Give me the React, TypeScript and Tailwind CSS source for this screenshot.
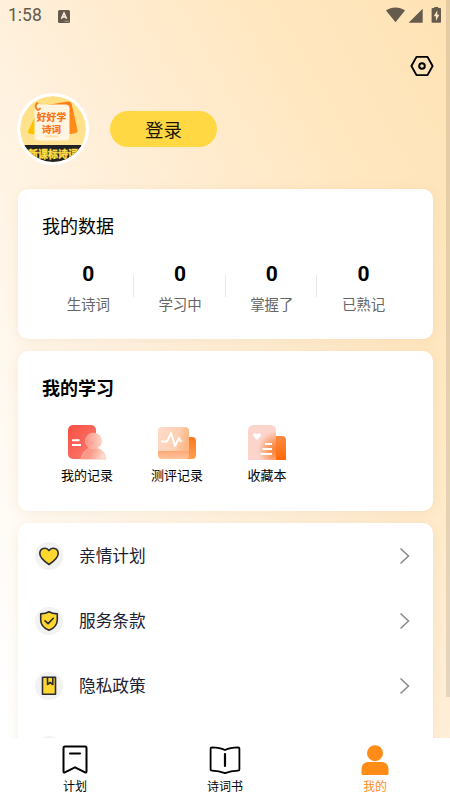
import type { ReactNode } from "react";

const stats = [
  { label: "生诗词", value: 0 },
  { label: "学习中", value: 0 },
  { label: "掌握了", value: 0 },
  { label: "已熟记", value: 0 },
];

function StatusBar() {
  return (
    <div className="flex h-[32px] shrink-0 items-center pl-[8px] pr-[8px] text-[#655b4c]">
      <span className="font-[Roboto] text-[17.5px] leading-none">1:58</span>
      <svg className="ml-[16px] h-[13px] w-[12px]" viewBox="0 0 12 13">
        <rect width="12" height="13" rx="1.5" fill="currentColor" />
        <path d="M3.4 8.8 6 3l2.6 5.8M4.4 7h3.2" fill="none" stroke="#fff2df" strokeWidth="1.5" />
        <path d="M6.5 11.3h4.5" stroke="#b3a897" strokeWidth="0.8" />
      </svg>
      <svg className="ml-auto h-[18px] w-[58px]" viewBox="0 0 58 18" fill="currentColor">
        <path d="M2 3.600C7.400-.700 15.600-.700 21 3.600L11.500 15.200Z" />
        <path d="M38.700 1.700v14H24.600Z" />
        <path d="M50.300-.500h3.900v1.600h2.100q.7 0 .7.800v13.100q0 .7-.7.700h-8q-.7 0-.7-.7V1.900q0-.8.700-.8h2z" />
        <path d="M53.300 3.500 49.700 9.200h2.200v4.800l3.400-6.200h-2z" fill="#ffe6bf" />
      </svg>
    </div>
  );
}

function Avatar() {
  return (
    <div className="h-[72px] w-[72px] shrink-0 overflow-hidden rounded-full border-[3px] border-white bg-white">
      <svg className="h-full w-full rounded-full" viewBox="0 0 66 66">
        <defs>
          <linearGradient id="avatarBg" x1="0" y1="0" x2="0" y2="1">
            <stop offset="0" stopColor="#ffdf80" />
            <stop offset="1" stopColor="#ffe59b" />
          </linearGradient>
          <linearGradient id="avatarCard" x1="0" y1="0" x2="0.3" y2="1">
            <stop offset="0" stopColor="#ff7a12" />
            <stop offset="1" stopColor="#ff8d1c" />
          </linearGradient>
        </defs>
        <rect width="66" height="66" fill="url(#avatarBg)" />
        <path d="M16 19 8 35q-.8 2 1.200 2.600L17 39Z" fill="#ffc400" />
        <path d="M24 9.500 48 5.500q3-.4 3.700 2.500L57.500 34q.4 2.600-2.300 3.200L45 39Z" fill="url(#avatarCard)" />
        <rect x="14.500" y="8.500" width="35" height="36" rx="4" fill="#fff5e0" />
        <path d="M21 12.500q-1.800 2.700-3.600.2-1.800-3.600.9-5.600" fill="none" stroke="#ff7f22" strokeWidth="2" strokeLinecap="round" transform="translate(-1 0)" />
        <text x="31.500" y="24.800" textAnchor="middle" fontFamily="Noto Sans CJK SC, sans-serif" fontWeight="900" fontSize="9.800" fill="#fa7411">好好学</text>
        <text x="31.500" y="36.500" textAnchor="middle" fontFamily="Noto Sans CJK SC, sans-serif" fontWeight="900" fontSize="9.600" fill="#fa7411">诗词</text>
        <rect x="25" y="39.500" width="13" height="1.800" rx=".9" fill="#ffe0a0" />
        <rect y="49" width="66" height="17" fill="#202124" />
        <text x="33" y="61.700" textAnchor="middle" fontFamily="Noto Sans CJK SC, sans-serif" fontWeight="900" fontSize="10" fill="#ffdc45" stroke="#ffdc45" strokeWidth=".3">新课标诗词</text>
      </svg>
    </div>
  );
}

function RecordIcon() {
  return (
    <svg className="h-[36px] w-[40px]" viewBox="0 0 40 36">
      <defs>
        <linearGradient id="recordBook" x1="0" y1="0" x2="1" y2="1">
          <stop offset="0" stopColor="#f94d42" />
          <stop offset="1" stopColor="#fc8174" />
        </linearGradient>
        <linearGradient id="recordHead" x1="0" y1="0" x2="1" y2="0">
          <stop offset="0" stopColor="#fc9284" />
          <stop offset="1" stopColor="#fed3c4" />
        </linearGradient>
        <linearGradient id="recordBody" x1="0" y1="0" x2="1" y2="0.2">
          <stop offset="0" stopColor="#fb9989" />
          <stop offset="0.45" stopColor="#fb9887" />
          <stop offset="1" stopColor="#fddccd" />
        </linearGradient>
      </defs>
      <rect x="1" y="1" width="28" height="34" rx="5" fill="url(#recordBook)" />
      <path d="M5 16.200h7.500M5 21h9" stroke="#fff" strokeWidth="2" />
      <path d="M14 35.200c.8-6.500 4.500-11.200 12.400-11.200s12 4.700 12.600 11.200Z" fill="url(#recordBody)" stroke="#fdb5a7" strokeWidth=".5" />
      <circle cx="26.500" cy="17" r="8" fill="url(#recordHead)" stroke="#fdb9a9" strokeWidth=".6" />
    </svg>
  );
}

function ReviewIcon() {
  return (
    <svg className="h-[36px] w-[40px]" viewBox="0 0 40 36">
      <defs>
        <linearGradient id="reviewBack" x1="0" y1="0" x2="0" y2="1">
          <stop offset="0" stopColor="#f9781f" />
          <stop offset="1" stopColor="#ffa04e" />
        </linearGradient>
        <linearGradient id="reviewFront" x1="0" y1="0" x2="1" y2="0.25">
          <stop offset="0" stopColor="#fedbc9" />
          <stop offset="0.65" stopColor="#fed0b3" />
          <stop offset="1" stopColor="#fdb684" />
        </linearGradient>
        <linearGradient id="reviewStrip" x1="0" y1="0" x2="0" y2="1">
          <stop offset="0" stopColor="#fda774" />
          <stop offset="1" stopColor="#ffc59f" />
        </linearGradient>
      </defs>
      <rect x="25" y="13" width="14" height="22" rx="4" fill="url(#reviewBack)" />
      <path d="M1 7q0-4 4-4h23q4 0 4 4v24q0 4-4 4H5q-4 0-4-4Z" fill="url(#reviewFront)" />
      <path d="M1 27h31v4q0 4-4 4H5q-4 0-4-4Z" fill="url(#reviewStrip)" />
      <path d="M4 17.500h6l4-8.500 4 13 4-8 2 4" fill="none" stroke="#fff" strokeWidth="2" strokeLinejoin="round" />
      <path d="m24 18 1.500-1.500" stroke="#ffe8d8" strokeWidth="1.500" />
    </svg>
  );
}

function FavoriteIcon() {
  return (
    <svg className="h-[36px] w-[40px]" viewBox="0 0 40 36">
      <defs>
        <linearGradient id="favoriteBack" x1="0" y1="0" x2="0" y2="1">
          <stop offset="0" stopColor="#fb8b43" />
          <stop offset="1" stopColor="#ff6909" />
        </linearGradient>
        <radialGradient id="favoriteGlow" gradientUnits="userSpaceOnUse" cx="30" cy="26" r="19">
          <stop offset="0" stopColor="#fa7a2d" />
          <stop offset="0.5" stopColor="#fba06b" />
          <stop offset="1" stopColor="#fbd4cb" />
        </radialGradient>
      </defs>
      <path d="M22 12h13q4 0 4 4v20H22Z" fill="url(#favoriteBack)" />
      <path d="M1 7q0-6 6-6h16q6 0 6 6v29H1Z" fill="url(#favoriteGlow)" />
      <path d="M10 16 6.800 12.800C4.400 10.200 8.200 7.700 10 10.300c1.800-2.600 5.600-.1 3.200 2.500Z" fill="#fff" />
      <path d="M18 20h7M15.500 25H25M13.500 30H25" stroke="#fff" strokeWidth="1.800" />
    </svg>
  );
}

const studyItems: { label: string; icon: ReactNode }[] = [
  { label: "我的记录", icon: <RecordIcon /> },
  { label: "测评记录", icon: <ReviewIcon /> },
  { label: "收藏本", icon: <FavoriteIcon /> },
];

const menuItems: { label: string; icon: ReactNode }[] = [
  {
    label: "亲情计划",
    icon: (
      <path d="M14 22.500C9.500 19.500 4.800 16 4.800 11.500c0-5.300 6.400-7 9.200-3 2.800-4 9.200-2.300 9.200 3 0 4.500-4.700 8-9.200 11Z" />
    ),
  },
  {
    label: "服务条款",
    icon: (
      <>
        <path d="M14 4.700c2.500 1.500 5.300 2 8.300 2.200v6c0 5-3.500 8.300-8.300 10.400-4.800-2.100-8.300-5.400-8.300-10.400v-6c3-.2 5.800-.7 8.300-2.200Z" />
        <path d="m10 13.800 3.100 2.800 5.200-5.300" fill="none" />
      </>
    ),
  },
  {
    label: "隐私政策",
    icon: (
      <>
        <path d="M7.500 5.300h13v16.900h-13Z" />
        <path d="M12.500 5.500v7l2.600-2 2.700 2v-7" fill="none" />
      </>
    ),
  },
];

function Card({ className, children }: { className: string; children: ReactNode }) {
  return (
    <section className={`shrink-0 rounded-[10px] bg-white shadow-[0_2px_12px_rgba(190,140,60,0.12)] ${className}`}>
      {children}
    </section>
  );
}

function TabBar() {
  return (
    <nav className="grid h-[63px] shrink-0 grid-cols-3 bg-white text-[12px] text-black">
      <button className="flex flex-col items-center pt-[6px]">
        <svg className="h-[32px] w-[32px]" viewBox="0 0 32 32" fill="none" stroke="currentColor" strokeWidth="2" strokeLinecap="round" strokeLinejoin="round">
          <path d="M6 2.500h20q1.500 0 1.500 1.500v23.500q0 1.500-1.400.8L16 23.300l-10.100 5Q4.500 29 4.500 27.500V4q0-1.500 1.500-1.500Z" />
          <path d="M11 9.500h10" />
        </svg>
        <span className="leading-[20px]">计划</span>
      </button>
      <button className="flex flex-col items-center pt-[6px]">
        <svg className="h-[32px] w-[32px]" viewBox="0 0 32 32" fill="none" stroke="currentColor" strokeWidth="1.800" strokeLinecap="round" strokeLinejoin="round">
          <path d="M16 6c-3.800-1.800-8.500-2.500-13-2.600q-1.400 0-1.400 1.400v20.400q0 1.400 1.400 1.400c4.500.1 9 .9 13 2.500 4-1.600 8.500-2.400 13-2.500q1.400 0 1.400-1.400V4.800q0-1.400-1.400-1.400C24.500 3.500 19.800 4.200 16 6Z" />
          <path d="M16 10v12" strokeWidth="2.200" />
        </svg>
        <span className="leading-[20px]">诗词书</span>
      </button>
      <button className="flex flex-col items-center pt-[6px] text-[#ff8c16]">
        <svg className="h-[32px] w-[32px]" viewBox="0 0 32 32" fill="currentColor">
          <circle cx="16" cy="9.200" r="8" />
          <path d="M2.500 26c0-5.500 2.500-8 8-8h11c5.500 0 8 2.500 8 8v3.800q0 1.200-1.200 1.200H3.700q-1.200 0-1.200-1.200Z" />
        </svg>
        <span className="leading-[20px]">我的</span>
      </button>
    </nav>
  );
}

export default function App() {
  return (
    <main className="relative flex h-[801px] w-[450px] flex-col overflow-hidden bg-[linear-gradient(to_bottom_left,#ffe3b5_0%,#ffe7c1_23%,#ffefd9_48%,#fff6e9_66%,#ffffff_94%)] font-['Noto_Sans_CJK_SC',sans-serif]">
      <div className="flex min-h-0 flex-1 flex-col overflow-hidden">
        <StatusBar />

        <header className="flex h-[157px] shrink-0 flex-col pl-[17px] pr-[16px]">
          <button className="mt-[22px] self-end">
            <svg className="h-[24px] w-[24px]" viewBox="0 0 24 24" fill="none" stroke="#000" strokeWidth="1.900" strokeLinejoin="round">
              <path d="M6.500 2.900h11L22.600 12l-5.100 9.100h-11L1.400 12Z" />
              <circle cx="12" cy="12" r="2.800" strokeWidth="2" />
            </svg>
          </button>
          <div className="mt-[15px] flex items-center gap-[21px]">
            <Avatar />
            <button className="h-[36px] w-[107px] rounded-full bg-[#ffd843] text-[18.5px] leading-[36px] text-[#1c1700]">
              登录
            </button>
          </div>
        </header>

        <div className="flex flex-col gap-[12px] pl-[18px] pr-[17px]">
          {/* Data */}
          <Card className="h-[150px] px-[24px] pt-[23px]">
            <h2 className="text-[18px] leading-[26px] text-black">我的数据</h2>
            <div className="mt-[22px] grid grid-cols-4">
              {stats.map((item, index) => (
                <div key={item.label} className="relative flex flex-col items-center pl-px">
                  <span className="font-[Roboto] text-[21px] font-bold leading-[28px] text-black">{item.value}</span>
                  <span className="mt-[6px] text-[14.5px] leading-[20px] text-[#666]">{item.label}</span>
                  {index > 0 && <span className="absolute -left-px top-[15px] h-[22px] w-px bg-[#e8e8e8]" />}
                </div>
              ))}
            </div>
          </Card>

          {/* Study */}
          <Card className="h-[160px] px-[24px] pt-[23px]">
            <h2 className="text-[18px] font-bold leading-[26px] text-black">我的学习</h2>
            <div className="mt-[24px] flex">
              {studyItems.map((item) => (
                <button key={item.label} className="flex w-[90px] flex-col items-center">
                  {item.icon}
                  <span className="mt-[5px] text-[13px] leading-[20px] text-black">{item.label}</span>
                </button>
              ))}
            </div>
          </Card>

          {/* Menu */}
          <Card className="h-[300px] pl-[17px] pr-[23px]">
            {menuItems.map((item) => (
              <button key={item.label} className="flex h-[65px] w-full items-center">
                <span className="flex h-[28px] w-[28px] items-center justify-center rounded-full bg-[#f2f2f3]">
                  <svg className="h-[28px] w-[28px]" viewBox="0 0 28 28" fill="#ffd72f" stroke="#2b2d33" strokeWidth="1.600" strokeLinejoin="round" strokeLinecap="round">
                    {item.icon}
                  </svg>
                </span>
                <span className="ml-[16px] pt-px text-[16.7px] text-[#1c2233]">{item.label}</span>
                <svg className="ml-auto h-[18px] w-[11px]" viewBox="0 0 11 18" fill="none" stroke="#888" strokeWidth="1.500">
                  <path d="m1.500 1.500 8 7.500-8 7.500" />
                </svg>
              </button>
            ))}
            {/* next row starts right under the tab bar */}
            <div className="mt-[18px] h-[28px] w-[28px] rounded-full bg-[#f2f2f3]" />
          </Card>
        </div>
      </div>

      <TabBar />

      {/* Scrollbar */}
      <div className="absolute right-0 top-0 h-[697px] w-[4px] bg-black/10" />
    </main>
  );
}
